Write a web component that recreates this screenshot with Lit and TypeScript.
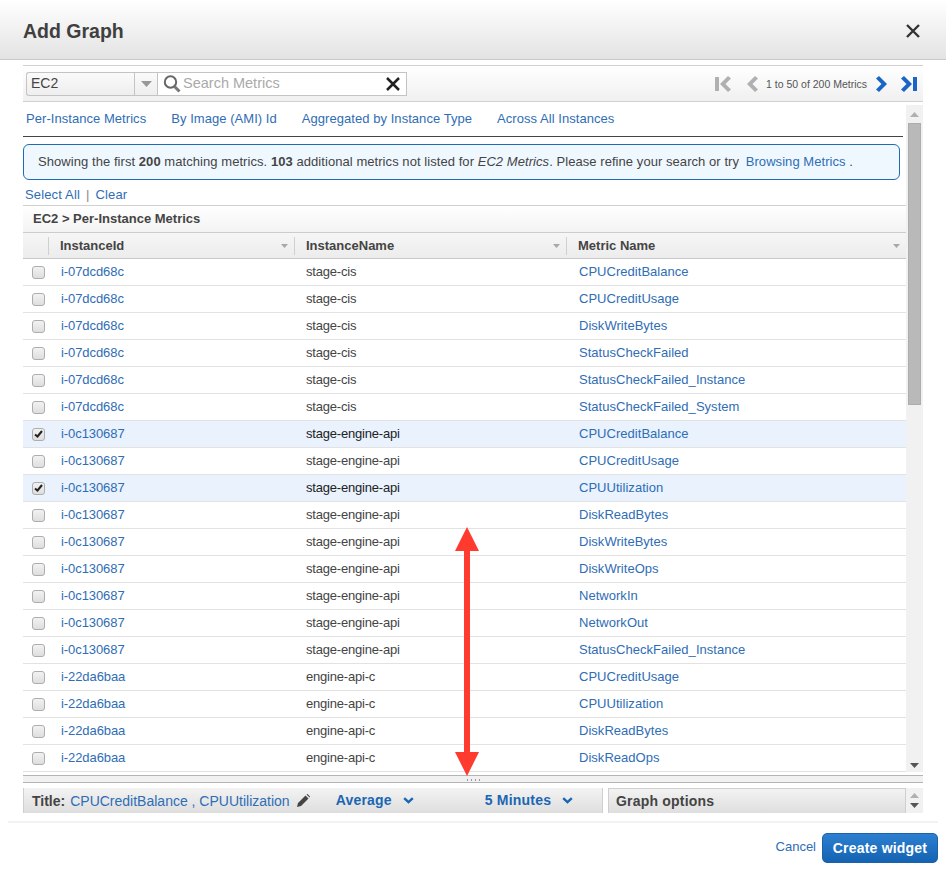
import { LitElement, css, html, svg } from 'lit';
import { customElement } from 'lit/decorators.js';

interface MetricRow {
  id: string;
  name: string;
  metric: string;
  checked?: boolean;
}

const cis = (metric: string): MetricRow => ({ id: 'i-07dcd68c', name: 'stage-cis', metric });
const api = (metric: string, checked = false): MetricRow => ({
  id: 'i-0c130687',
  name: 'stage-engine-api',
  metric,
  checked,
});
const eng = (metric: string): MetricRow => ({ id: 'i-22da6baa', name: 'engine-api-c', metric });

const ROWS: MetricRow[] = [
  cis('CPUCreditBalance'),
  cis('CPUCreditUsage'),
  cis('DiskWriteBytes'),
  cis('StatusCheckFailed'),
  cis('StatusCheckFailed_Instance'),
  cis('StatusCheckFailed_System'),
  api('CPUCreditBalance', true),
  api('CPUCreditUsage'),
  api('CPUUtilization', true),
  api('DiskReadBytes'),
  api('DiskWriteBytes'),
  api('DiskWriteOps'),
  api('NetworkIn'),
  api('NetworkOut'),
  api('StatusCheckFailed_Instance'),
  eng('CPUCreditUsage'),
  eng('CPUUtilization'),
  eng('DiskReadBytes'),
  eng('DiskReadOps'),
];

const TABS = ['Per-Instance Metrics', 'By Image (AMI) Id', 'Aggregated by Instance Type', 'Across All Instances'];

const sortCaret = html`<svg class="caret" width="7" height="4" viewBox="0 0 7 4">
  <path d="M0 0h7L3.500 4z" fill="#a8a8a8" />
</svg>`;

const chevronDown = html`<svg width="11" height="7" viewBox="0 0 11 7">
  <path d="M1.200 1.200 5.500 5.200 9.800 1.200" fill="none" stroke="#1a66b3" stroke-width="2.400" />
</svg>`;

const pageLeft = svg`<path d="M11 0 14 2.500 8.500 8 14 13.500 11 16 3 8z" />`;
const pageRight = svg`<path d="M3 0 0 2.500 5.500 8 0 13.500 3 16 11 8z" />`;

@customElement('app-root')
export class AppRoot extends LitElement {
  static styles = css`
    :host {
      display: block;
      height: 872px;
      overflow: hidden;
      position: relative;
      background: #fff;
      color: #444;
      font-family: 'Liberation Sans', Arial, sans-serif;
      font-size: 13px;
    }

    a {
      color: #2f6db5;
      text-decoration: none;
    }

    .header {
      height: 60px;
      box-sizing: border-box;
      border-bottom: 1px solid #c8c8c8;
      background: linear-gradient(to bottom, #fff, #e3e3e3);
      display: flex;
      align-items: center;
      justify-content: space-between;
      padding: 3px 26px 0 23px;
    }

    .header h1 {
      margin: 0;
      font-size: 19.5px;
      font-weight: 700;
      color: #3f3f3f;
    }

    .body {
      margin: 5px 23px 0;
    }

    .toolbar {
      height: 37px;
      box-sizing: border-box;
      border-top: 1px solid #d0d0d0;
      border-bottom: 1px solid #d0d0d0;
      background: linear-gradient(to bottom, #fff, #f0f0f0);
      display: flex;
      align-items: center;
      padding: 0 6px 0 3px;
    }

    .select {
      width: 131px;
      height: 24px;
      box-sizing: border-box;
      border: 1px solid #c4c4c4;
      border-right: none;
      border-radius: 3px 0 0 3px;
      background: linear-gradient(to bottom, #fafafa, #eee);
      display: flex;
      align-items: center;
      font-size: 14px;
      color: #444;
    }

    .select .value {
      width: 108px;
      box-sizing: border-box;
      padding-left: 4px;
      line-height: 21px;
      border-right: 1px solid #c4c4c4;
      height: 100%;
    }

    .select svg {
      margin-left: 6px;
    }

    .search {
      width: 250px;
      height: 24px;
      box-sizing: border-box;
      border: 1px solid #c4c4c4;
      background: #fff;
      display: flex;
      align-items: center;
      padding: 0 6px 0 5px;
      font-size: 14.5px;
      color: #aaa;
    }

    .search .placeholder {
      flex: 1;
      margin-left: 1px;
      margin-top: -2px;
    }

    .pager {
      margin-left: auto;
      display: flex;
      align-items: center;
      font-size: 10.5px;
      color: #555;
    }

    .pager span {
      margin: 0 9px 0 8px;
    }

    .main {
      display: flex;
      height: 670px;
    }

    .content {
      width: 883px;
    }

    .tabs {
      margin-right: 3px;
      height: 35px;
      box-sizing: border-box;
      border-bottom: 1px solid #444;
      display: flex;
      align-items: center;
      gap: 25px;
      padding: 0 0 2px 3px;
    }

    .tabs a {
      letter-spacing: 0.05px;
    }

    .info {
      margin-top: 7px;
      width: 877px;
      height: 36px;
      box-sizing: border-box;
      border: 1px solid #1f6bb5;
      border-radius: 6px;
      background: #f0f8ff;
      padding: 0 14px;
      line-height: 33px;
      white-space: nowrap;
      overflow: hidden;
      letter-spacing: 0.06px;
    }

    .info a {
      margin-left: 3px;
    }

    .select-links {
      height: 25px;
      padding: 3px 0 0 2px;
      box-sizing: border-box;
      display: flex;
      align-items: center;
      color: #888;
      letter-spacing: 0.15px;
    }

    .select-links i {
      font-style: normal;
      margin: 0 6px;
    }

    .group {
      height: 28px;
      box-sizing: border-box;
      border-top: 1px solid #d0d0d0;
      border-bottom: 1px solid #ccc;
      background: linear-gradient(to bottom, #fff, #f3f3f3);
      font-weight: 700;
      padding: 0 0 2px 10px;
      display: flex;
      align-items: center;
      color: #444;
    }

    .thead,
    .row {
      display: grid;
      grid-template-columns: 25px 246px 272px 1fr;
    }

    .thead {
      height: 26px;
      box-sizing: border-box;
      border-bottom: 1px solid #c8c8c8;
      background: linear-gradient(to bottom, #f6f6f6, #ececec);
      font-weight: 700;
      align-items: center;
    }

    .th {
      height: 18px;
      border-left: 1px solid #d0d0d0;
      padding: 0 6px 0 11px;
      display: flex;
      align-items: center;
      justify-content: space-between;
      color: #444;
    }

    .th:first-child {
      border-left: none;
    }

    .rows {
      height: 513px;
      overflow: hidden;
    }

    .row {
      height: 27px;
      box-sizing: border-box;
      border-bottom: 1px solid #e2e2e2;
      padding-bottom: 2px;
      align-items: center;
    }

    .row.checked {
      background: #e9f2fd;
      color: #222;
    }

    .row .cb-cell {
      padding-left: 9px;
      margin-top: 2px;
      display: flex;
    }

    .row .id {
      padding-left: 13px;
      letter-spacing: -0.08px;
    }

    .row .name {
      padding-left: 12px;
      letter-spacing: -0.2px;
    }

    .row .metric {
      padding-left: 13px;
      letter-spacing: 0.03px;
    }

    .cb {
      width: 13px;
      height: 13px;
      box-sizing: border-box;
      border: 1px solid #adadad;
      border-radius: 3px;
      background: linear-gradient(to bottom, #f2f2f2, #dedede);
      display: flex;
      align-items: center;
      justify-content: center;
    }

    .scrollbar {
      width: 17px;
      margin-top: 3px;
      background: #f1f1f1;
      display: flex;
      flex-direction: column;
      align-items: center;
    }

    .scrollbar .up {
      margin-top: 7px;
    }

    .scrollbar .thumb {
      width: 13px;
      height: 282px;
      box-sizing: border-box;
      margin-top: 6px;
      background: #b9b9b9;
      border: 1px solid #adadad;
    }

    .scrollbar .down {
      margin-top: auto;
      margin-bottom: 4px;
    }

    .splitter {
      margin-top: 3px;
      height: 8px;
      box-sizing: border-box;
      border-top: 1px solid #b4b4b4;
      border-bottom: 1px solid #b4b4b4;
      background: #f1f1f1;
      display: flex;
      justify-content: center;
      gap: 3px;
      padding-top: 3px;
    }

    .splitter b {
      width: 1px;
      height: 2px;
      background: #999;
    }

    .options {
      margin-top: 5px;
      height: 25px;
      display: flex;
    }

    .panel {
      box-sizing: border-box;
      height: 25px;
      border: 1px solid #cfcfcf;
      border-bottom: none;
      background: linear-gradient(to bottom, #f3f3f3, #dedede);
      display: flex;
      align-items: center;
      font-weight: 700;
    }

    .title-panel {
      width: 580px;
      padding-left: 8px;
      border-top: none;
    }

    .title-panel .label {
      color: #444;
      font-size: 14px;
      margin-right: 5px;
    }

    .title-panel a.title {
      font-weight: 400;
      font-size: 14px;
    }

    .title-panel svg.pencil {
      margin: 0 26px 0 7px;
    }

    .stat {
      color: #1a66b3;
      font-size: 14px;
      letter-spacing: 0.2px;
      margin-right: 11px;
      margin-top: -2px;
    }

    .panel .period {
      margin-left: 71px;
    }

    .graph-panel {
      margin-left: 5px;
      width: 298px;
      padding-left: 7px;
      font-size: 14px;
      letter-spacing: 0.2px;
      color: #444;
    }

    .spinner {
      width: 17px;
      background: #f1f1f1;
      display: flex;
      flex-direction: column;
      align-items: center;
      justify-content: center;
      gap: 5px;
    }

    .divider {
      margin: 8px 8px 0;
      height: 2px;
      background: #f2f2f2;
    }

    .footer {
      display: flex;
      justify-content: flex-end;
      align-items: flex-start;
      padding: 10px 8px 0 0;
      gap: 6px;
    }

    .footer a {
      margin-top: 6px;
      font-size: 13px;
    }

    .primary {
      width: 116px;
      height: 30px;
      box-sizing: border-box;
      border: 1px solid #1b62aa;
      border-radius: 5px;
      background: linear-gradient(to bottom, #2c7fd0, #1563b3);
      color: #fff;
      font: 700 14px 'Liberation Sans', Arial, sans-serif;
      letter-spacing: 0.2px;
      padding: 0;
    }

    .annotation {
      position: absolute;
      left: 455px;
      top: 527px;
    }
  `;

  render() {
    return html`
      <div class="header">
        <h1>Add Graph</h1>
        <svg width="14" height="14" viewBox="0 0 14 14">
          <path d="M1 1 13 13M13 1 1 13" stroke="#333" stroke-width="2.4" />
        </svg>
      </div>

      <div class="body">
        <div class="toolbar">
          <div class="select">
            <div class="value">EC2</div>
            <svg width="11" height="6" viewBox="0 0 11 6"><path d="M0 0h11L5.500 6z" fill="#999" /></svg>
          </div>
          <div class="search">
            <svg width="19" height="20" viewBox="0 0 19 20">
              <circle cx="7.500" cy="8" r="5.700" fill="none" stroke="#666" stroke-width="2" />
              <path d="M11.500 12.500 16.500 17.500" stroke="#777" stroke-width="3" />
            </svg>
            <span class="placeholder">Search Metrics</span>
            <svg width="14" height="14" viewBox="0 0 14 14">
              <path d="M1 1 13 13M13 1 1 13" stroke="#222" stroke-width="2.5" />
            </svg>
          </div>
          <div class="pager">
            <svg width="17" height="16" viewBox="0 0 17 16" fill="#b0b0b0">
              <rect x="0" y="1" width="4" height="14" /><g transform="translate(2 0)">${pageLeft}</g>
            </svg>
            <svg width="12" height="16" viewBox="2 0 12 16" fill="#b0b0b0" style="margin-left:14px">${pageLeft}</svg>
            <span>1 to 50 of 200 Metrics</span>
            <svg width="11" height="16" viewBox="0 0 11 16" fill="#1a66c4">${pageRight}</svg>
            <svg width="16" height="16" viewBox="0 0 16 16" fill="#1a66c4" style="margin-left:14px">
              ${pageRight}<rect x="12" y="1" width="4" height="14" />
            </svg>
          </div>
        </div>

        <div class="main">
          <div class="content">
            <div class="tabs">${TABS.map((t) => html`<a href="#">${t}</a>`)}</div>
            <div class="info">Showing the first <b>200</b> matching metrics. <b>103</b> additional metrics not listed for <em>EC2 Metrics</em>. Please refine your search or try <a href="#">Browsing Metrics</a> .</div>
            <div class="select-links"><a href="#">Select All</a><i>|</i><a href="#">Clear</a></div>
            <div class="group">EC2 &gt; Per-Instance Metrics</div>
            <div class="thead">
              <div class="th"></div>
              <div class="th">InstanceId ${sortCaret}</div>
              <div class="th">InstanceName ${sortCaret}</div>
              <div class="th">Metric Name ${sortCaret}</div>
            </div>
            <div class="rows">
              ${ROWS.map(
                (r) => html`
                  <div class="row ${r.checked ? 'checked' : ''}">
                    <div class="cb-cell">
                      <span class="cb">
                        ${r.checked
                          ? html`<svg width="9" height="8" viewBox="0 0 9 8">
                              <path d="M1 4.500 3.500 6.500 8 1" fill="none" stroke="#222" stroke-width="2" />
                            </svg>`
                          : ''}
                      </span>
                    </div>
                    <a class="id" href="#">${r.id}</a>
                    <div class="name">${r.name}</div>
                    <a class="metric" href="#">${r.metric}</a>
                  </div>
                `,
              )}
            </div>
          </div>
          <div class="scrollbar">
            <svg class="up" width="9" height="5" viewBox="0 0 9 5"><path d="M0 5h9L4.500 0z" fill="#b0b0b0" /></svg>
            <div class="thumb"></div>
            <svg class="down" width="9" height="5" viewBox="0 0 9 5"><path d="M0 0h9L4.500 5z" fill="#555" /></svg>
          </div>
        </div>

        <div class="splitter"><b></b><b></b><b></b><b></b></div>

        <div class="options">
          <div class="panel title-panel">
            <span class="label">Title:</span>
            <a class="title" href="#">CPUCreditBalance , CPUUtilization</a>
            <svg class="pencil" width="13" height="13" viewBox="0 0 13 13">
              <path d="M0 13 1 9 8.500 1.500 11.500 4.500 4 12zM9.500.5 10.500 0 13 2.500 12.500 3.500z" fill="#444" />
            </svg>
            <span class="stat">Average</span>${chevronDown}
            <span class="stat period">5 Minutes</span>${chevronDown}
          </div>
          <div class="panel graph-panel">Graph options</div>
          <div class="spinner">
            <svg width="9" height="5" viewBox="0 0 9 5"><path d="M0 5h9L4.500 0z" fill="#b0b0b0" /></svg>
            <svg width="9" height="5" viewBox="0 0 9 5"><path d="M0 0h9L4.500 5z" fill="#555" /></svg>
          </div>
        </div>
      </div>

      <div class="divider"></div>
      <div class="footer">
        <a href="#">Cancel</a>
        <button class="primary">Create widget</button>
      </div>

      <svg class="annotation" width="24" height="250" viewBox="0 0 24 250">
        <path d="M12 0 24 24H15V225H24L12 249 0 225H9V24H0z" fill="#ff3b30" />
      </svg>
    `;
  }
}
